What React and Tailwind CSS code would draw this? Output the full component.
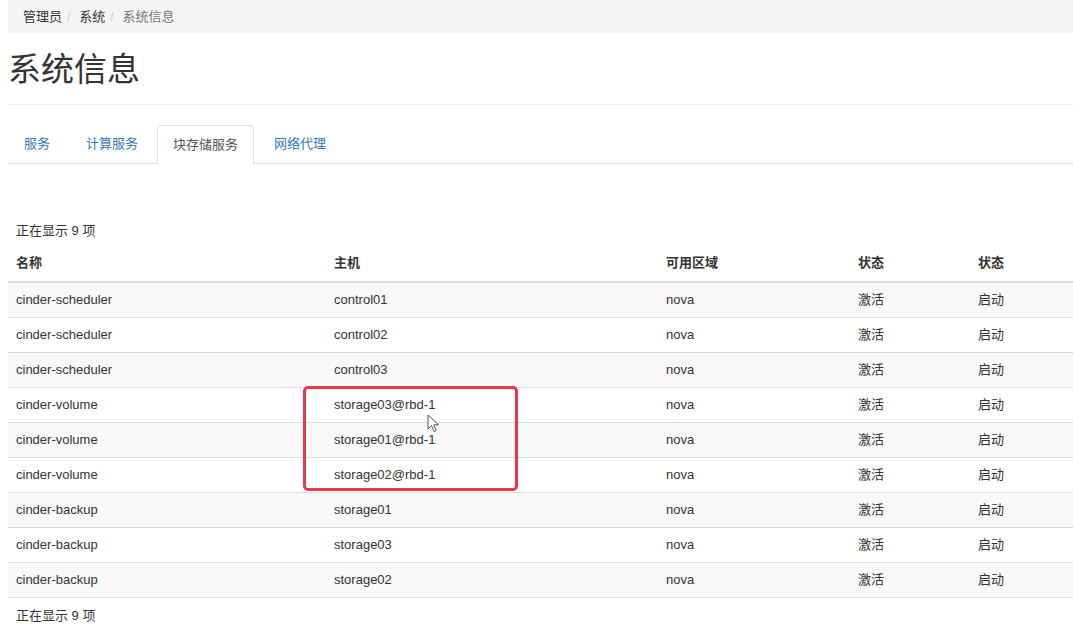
import React from "react";

const rows = [
  ["cinder-scheduler", "control01"],
  ["cinder-scheduler", "control02"],
  ["cinder-scheduler", "control03"],
  ["cinder-volume", "storage03@rbd-1"],
  ["cinder-volume", "storage01@rbd-1"],
  ["cinder-volume", "storage02@rbd-1"],
  ["cinder-backup", "storage01"],
  ["cinder-backup", "storage03"],
  ["cinder-backup", "storage02"],
];

const font = { fontFamily: '"Liberation Sans", "Noto Sans CJK SC", sans-serif' };

const Cursor = () => (
  <svg width="14" height="20" viewBox="0 0 14 20" className="absolute left-[427px] top-[414px]">
    <path d="M1 1 L1 15 L4.5 11.5 L7 17.5 L9.2 16.5 L6.8 10.8 L11.5 10.8 Z" fill="#fff" stroke="#555" strokeWidth="1" strokeLinejoin="round" />
  </svg>
);

const App = () => {
  return (
    <div className="relative bg-white min-h-[641px] pl-2 text-[13px] text-[#333]" style={font}>
      <div className="h-[33px] bg-[#f5f5f5] flex items-center pl-[15px] text-[13px]">
        <span className="text-[#333]">管理员</span>
        <span className="text-[#ccc] px-[5px]">/&nbsp;</span>
        <span className="text-[#333]">系统</span>
        <span className="text-[#ccc] px-[5px]">/&nbsp;</span>
        <span className="text-[#777]">系统信息</span>
      </div>

      <div className="border-b border-[#eee] h-[72px] flex items-center">
        <h1 className="text-[33px] leading-none text-[#333] mt-[2px]">系统信息</h1>
      </div>

      <div className="mt-[20px] flex border-b border-[#ddd] h-[39px]">
        <div className="px-4 mr-[4px] flex items-center text-[#337ab7]">服务</div>
        <div className="px-4 mr-[3px] flex items-center text-[#337ab7]">计算服务</div>
        <div className="px-[15px] mr-[4px] flex items-center text-[#555] bg-white border border-[#ddd] border-b-white rounded-t-[4px] h-[40px]">块存储服务</div>
        <div className="px-4 flex items-center text-[#337ab7]">网络代理</div>
      </div>

      <div className="pt-[57px]">
        <div className="pl-2 h-[20px] flex items-center">正在显示 9 项</div>
        <table className="w-full border-collapse mt-[4px]">
          <thead>
            <tr className="border-b-2 border-[#ddd] h-[37px]">
              <th className="text-left font-bold px-2 w-[318px]">名称</th>
              <th className="text-left font-bold px-2 w-[332px]">主机</th>
              <th className="text-left font-bold px-2 w-[192px]">可用区域</th>
              <th className="text-left font-bold px-2 w-[120px]">状态</th>
              <th className="text-left font-bold px-2">状态</th>
            </tr>
          </thead>
          <tbody>
            {rows.map((r, i) => (
              <tr key={i} className={`h-[35px] border-t border-[#ddd] ${i % 2 === 0 ? "bg-[#f9f9f9]" : "bg-white"}`}>
                <td className="px-2">{r[0]}</td>
                <td className="px-2">{r[1]}</td>
                <td className="px-2">nova</td>
                <td className="px-2">激活</td>
                <td className="px-2">启动</td>
              </tr>
            ))}
            <tr className="border-t border-[#ddd]"><td colSpan={5}></td></tr>
          </tbody>
        </table>
        <div className="pl-2 h-[36px] flex items-center">正在显示 9 项</div>
      </div>

      <div className="absolute left-[303px] top-[386px] w-[215px] h-[105px] border-[3px] border-[#e8384f] rounded-[5px]"></div>
      <Cursor />
    </div>
  );
};

export default App;
